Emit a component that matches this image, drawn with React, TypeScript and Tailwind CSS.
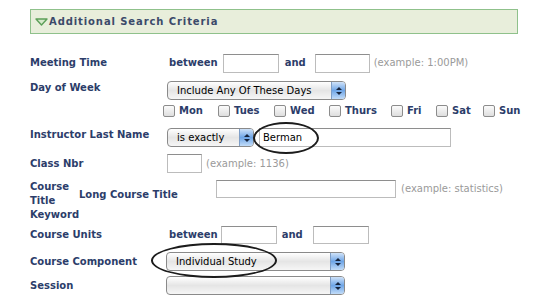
import React from 'react'

const labelCls = 'text-[10px] font-bold text-[#2c3d6a] leading-[14px]'
const exampleCls = 'text-[10px] text-[#9a9a9a] leading-[14px]'

function TextBox({ w, h = 19, value }: { w: number; h?: number; value?: string }) {
  return (
    <div
      className="flex items-center border border-[#bcbcbc] border-t-[#8e8e8e] bg-white pl-[3px] text-[10px] text-black"
      style={{ width: w, height: h }}
    >
      {value}
    </div>
  )
}

function Select({ w, value }: { w: number; value?: string }) {
  return (
    <div
      className="flex h-[19px] items-center rounded-[4px] border border-[#8a8a8a] bg-linear-to-b from-white via-[#e5e5e5] to-[#f6f6f6]"
      style={{ width: w }}
    >
      <span className="pl-[9px] text-[10px] leading-none text-black">{value}</span>
      <div className="ml-auto flex h-full w-[14px] flex-col items-center justify-center gap-[2px] rounded-r-[3px] border-l border-[#7d9dc6] bg-linear-to-b from-[#cfe2f8] via-[#6ea5e6] to-[#c2dcf8]">
        <svg width="6" height="3" viewBox="0 0 6 3">
          <polygon points="0,3 6,3 3,0" fill="#16243d" />
        </svg>
        <svg width="6" height="3" viewBox="0 0 6 3">
          <polygon points="0,0 6,0 3,3" fill="#16243d" />
        </svg>
      </div>
    </div>
  )
}

function Check({ label, w }: { label: string; w: number }) {
  return (
    <div className="flex items-center" style={{ width: w }}>
      <div className="h-[12px] w-[12px] rounded-[2px] border border-[#8c8c8c] bg-linear-to-b from-[#fbfbfb] to-[#dedede]" />
      <span className={labelCls + ' ml-[4px]'}>{label}</span>
    </div>
  )
}

export default function App() {
  const days = [
    { label: 'Mon', w: 55 },
    { label: 'Tues', w: 56 },
    { label: 'Wed', w: 55 },
    { label: 'Thurs', w: 62 },
    { label: 'Fri', w: 45 },
    { label: 'Sat', w: 47 },
    { label: 'Sun', w: 40 },
  ]

  return (
    <div className="relative h-[300px] w-[560px] overflow-hidden bg-white pl-[30px] pt-[9px] font-['DejaVu_Sans','Liberation_Sans',sans-serif]">
      {/* header bar */}
      <div className="flex h-[25px] w-[488px] items-center border border-[#8fc18b] bg-[#e8eedb] pl-[4px]">
        <svg width="13" height="8" viewBox="0 0 13 8">
          <polygon points="1,1 12,1 6.5,7" fill="#d7e9cc" stroke="#5c9f58" strokeWidth="1.4" strokeLinejoin="round" />
        </svg>
        <span className="ml-[1px] text-[10px] font-bold tracking-[0.9px] text-[#3b4a6a]">
          Additional Search Criteria
        </span>
      </div>

      {/* Meeting Time */}
      <div className="mt-[19px] flex h-[20px] items-center">
        <div className={labelCls + ' w-[137px]'}>Meeting Time</div>
        <span className={labelCls + ' ml-[2px] mr-[5px]'}>between</span>
        <TextBox w={56} />
        <span className={labelCls + ' ml-[6px] mr-[9px]'}>and</span>
        <TextBox w={55} />
        <span className={exampleCls + ' ml-[4px]'}>(example: 1:00PM)</span>
      </div>

      {/* Day of Week */}
      <div className="mt-[8px] flex h-[19px] items-center">
        <div className={labelCls + ' mb-[6px] w-[137px]'}>Day of Week</div>
        <Select w={179} value="Include Any Of These Days" />
      </div>

      {/* days */}
      <div className="mt-[1px] flex h-[20px] items-center">
        <div className="w-[133px]" />
        {days.map((d) => (
          <Check key={d.label} label={d.label} w={d.w} />
        ))}
      </div>

      {/* Instructor */}
      <div className="mt-[7px] flex h-[19px] items-center">
        <div className={labelCls + ' mb-[5px] w-[137px]'}>Instructor Last Name</div>
        <Select w={87} value="is exactly" />
        <div className="ml-[5px]">
          <TextBox w={192} value="Berman" />
        </div>
      </div>

      {/* Class Nbr */}
      <div className="mt-[7px] flex h-[19px] items-center">
        <div className={labelCls + ' w-[137px]'}>Class Nbr</div>
        <TextBox w={35} />
        <span className={exampleCls + ' ml-[4px]'}>(example: 1136)</span>
      </div>

      {/* Course Title Keyword */}
      <div className="mt-[7px] flex h-[42px] items-start">
        <div className="flex w-[186px] items-start">
          <div className={labelCls + ' w-[49px]'}>Course Title Keyword</div>
          <div className={labelCls + ' mt-[8px]'}>Long Course Title</div>
        </div>
        <TextBox w={180} h={18} />
        <span className={exampleCls + ' ml-[5px] mt-[2px]'}>(example: statistics)</span>
      </div>

      {/* Course Units */}
      <div className="mt-[4px] flex h-[18px] items-center">
        <div className={labelCls + ' w-[137px]'}>Course Units</div>
        <span className={labelCls + ' ml-[2px] mr-[3px]'}>between</span>
        <TextBox w={56} h={18} />
        <span className={labelCls + ' ml-[5px] mr-[10px]'}>and</span>
        <TextBox w={56} h={18} />
      </div>

      {/* Course Component */}
      <div className="mt-[8px] flex h-[19px] items-center">
        <div className={labelCls + ' w-[136px]'}>Course Component</div>
        <Select w={179} value="Individual Study" />
      </div>

      {/* Session */}
      <div className="mt-[5px] flex h-[19px] items-center">
        <div className={labelCls + ' w-[136px]'}>Session</div>
        <Select w={179} />
      </div>

      {/* hand-drawn annotation ellipses */}
      <div className="pointer-events-none absolute left-[253px] top-[122px] h-[32px] w-[66px] rounded-[50%] border-2 border-[#1c1c1c]" />
      <div className="pointer-events-none absolute left-[151px] top-[243px] h-[35px] w-[126px] rounded-[50%] border-2 border-[#1c1c1c]" />
    </div>
  )
}
